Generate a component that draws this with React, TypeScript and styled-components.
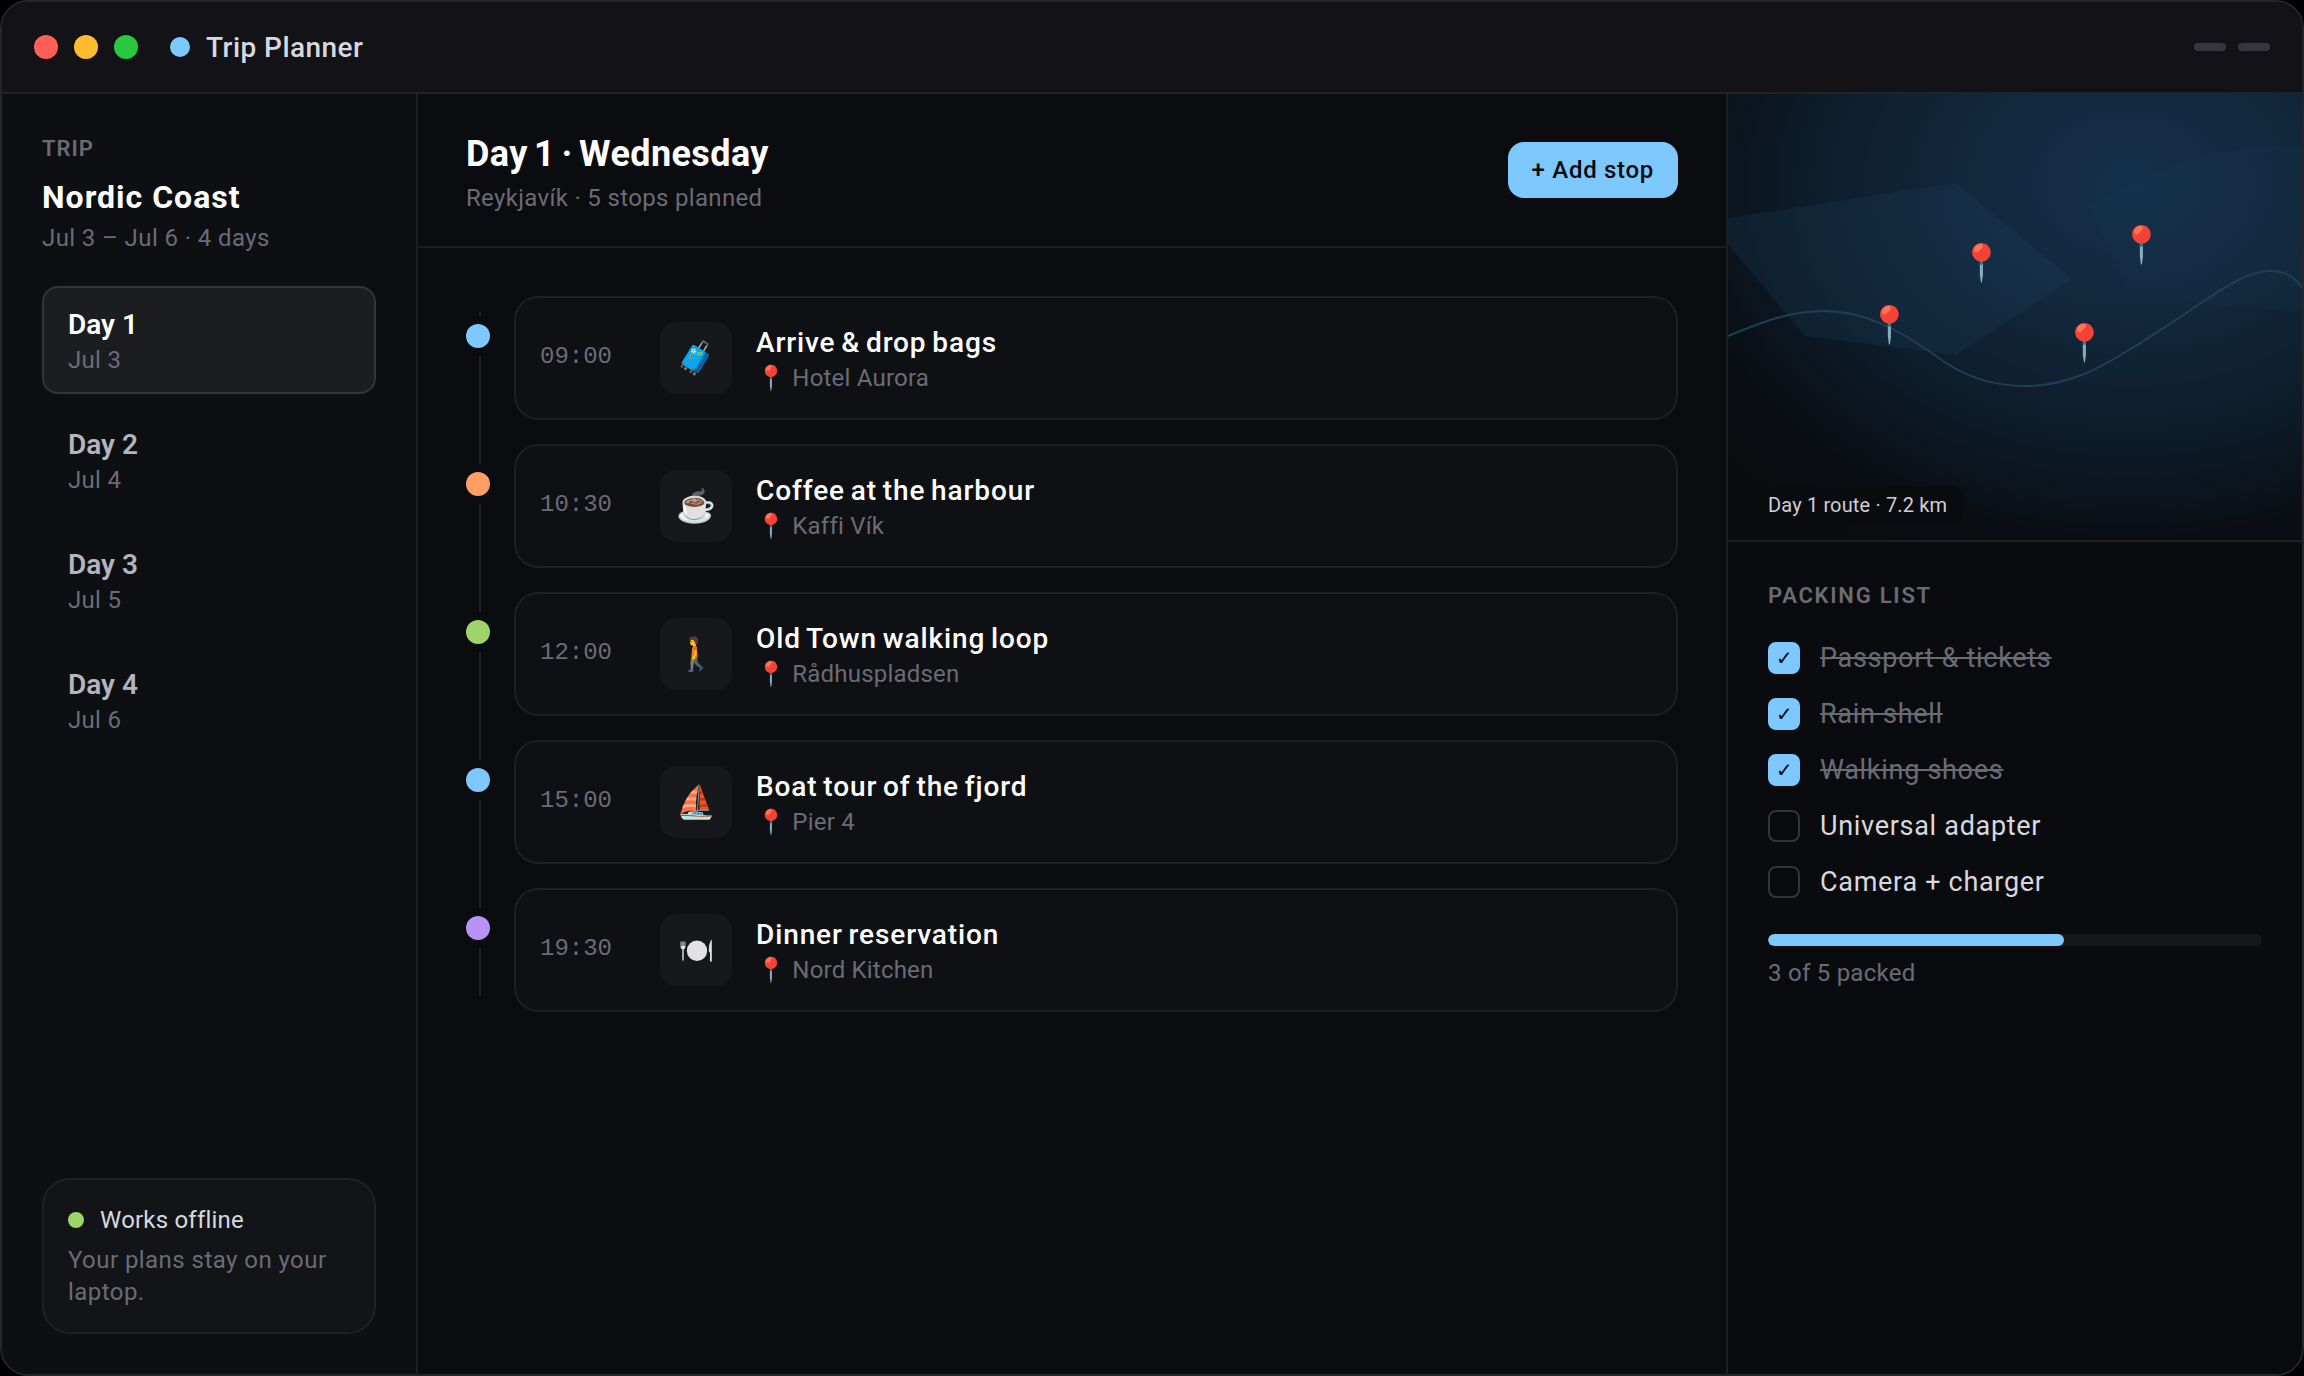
import React from "react";
import styled, { createGlobalStyle } from "styled-components";

const GlobalStyle = createGlobalStyle`
  * {
    box-sizing: border-box;
  }

  html,
  body {
    margin: 0;
    padding: 0;
    background: #000;
  }

  body {
    font-family: Roboto, "Noto Sans", sans-serif;
  }
`;

function PlateIcon() {
  return (
    <svg width="32" height="23" viewBox="0 0 32 23" fill="#e2e2e6">
      <path d="M0.6 2.5 H1.5 V7 H2.4 V2.5 H3.6 V7 H4.5 V2.5 H5.4 V8 A2.4 2.4 0 0 1 3.7 10.3 V21.5 H2.3 V10.3 A2.4 2.4 0 0 1 0.6 8 Z" />
      <circle cx="17" cy="11.7" r="10.2" />
      <path d="M31.8 0.5 C29.4 3 28.6 8 29 13 L30 13.5 V22.5 H31.8 Z" />
    </svg>
  );
}

const days = [
  { name: "Day 1", date: "Jul 3" },
  { name: "Day 2", date: "Jul 4" },
  { name: "Day 3", date: "Jul 5" },
  { name: "Day 4", date: "Jul 6" },
];

const stops = [
  { time: "09:00", icon: "🧳", title: "Arrive & drop bags", place: "Hotel Aurora", color: "#7cc8ff" },
  { time: "10:30", icon: "☕", title: "Coffee at the harbour", place: "Kaffi Vík", color: "#ff9f66" },
  { time: "12:00", icon: "🚶", title: "Old Town walking loop", place: "Rådhuspladsen", color: "#a0d468" },
  { time: "15:00", icon: "⛵", title: "Boat tour of the fjord", place: "Pier 4", color: "#7cc8ff" },
  { time: "19:30", icon: <PlateIcon />, title: "Dinner reservation", place: "Nord Kitchen", color: "#b794f4" },
];

const packing = [
  { label: "Passport & tickets", done: true },
  { label: "Rain shell", done: true },
  { label: "Walking shoes", done: true },
  { label: "Universal adapter", done: false },
  { label: "Camera + charger", done: false },
];

const pins = [
  { x: 161, y: 210 },
  { x: 253, y: 148 },
  { x: 413, y: 130 },
  { x: 356, y: 228 },
];

export default function App() {
  const doneCount = packing.filter((item) => item.done).length;

  return (
    <>
      <GlobalStyle />
      <Window>
        <TitleBar>
          <Light $color="#ff5f57" />
          <Light $color="#febc2e" />
          <Light $color="#28c840" />
          <BrandDot />
          <AppName>Trip Planner</AppName>
          <WindowControls>
            <ControlBar />
            <ControlBar />
          </WindowControls>
        </TitleBar>

        <Body>
          <Sidebar>
            <TripLabel>TRIP</TripLabel>
            <TripName>Nordic Coast</TripName>
            <TripDates>Jul 3 – Jul 6 · 4 days</TripDates>
            <DayList>
              {days.map((day, index) => (
                <DayItem key={day.name} $active={index === 0}>
                  <DayName $active={index === 0}>{day.name}</DayName>
                  <DayDate>{day.date}</DayDate>
                </DayItem>
              ))}
            </DayList>
            <OfflineCard>
              <OfflineHead>
                <OfflineDot />
                Works offline
              </OfflineHead>
              <OfflineText>Your plans stay on your laptop.</OfflineText>
            </OfflineCard>
          </Sidebar>

          <Main>
            <MainHeader>
              <HeadText>
                <DayTitle>Day 1 · Wednesday</DayTitle>
                <DaySub>Reykjavík · 5 stops planned</DaySub>
              </HeadText>
              <AddButton>+ Add stop</AddButton>
            </MainHeader>

            <Timeline>
              {stops.map((stop) => (
                <StopRow key={stop.time}>
                  <StopDot $color={stop.color} />
                  <StopCard>
                    <StopTime>{stop.time}</StopTime>
                    <StopIcon>{stop.icon}</StopIcon>
                    <StopText>
                      <StopTitle>{stop.title}</StopTitle>
                      <StopPlace>📍 {stop.place}</StopPlace>
                    </StopText>
                  </StopCard>
                </StopRow>
              ))}
            </Timeline>
          </Main>

          <RightPanel>
            <MapBox>
              <MapArt viewBox="0 0 574 446" preserveAspectRatio="none">
                <polygon points="0,124 228,89 344,185 228,261 77,242 0,151" fill="#1e4160" fillOpacity="0.24" />
                <polygon points="402,203 574,218 574,52 545,52 470,60 360,110" fill="#1e4160" fillOpacity="0.1" />
                <path
                  d="M0 242 C 34 228 62 217 96 217 C 140 217 178 240 215 267 C 240 284 268 292 297 292 C 340 292 372 274 401 256 C 426 241 448 226 476 207 C 500 191 522 177 542 177 C 558 177 568 184 574 194"
                  fill="none"
                  stroke="#1e3f55"
                  strokeWidth="2"
                />
              </MapArt>
              {pins.map((pin) => (
                <MapPin key={pin.x} $x={pin.x} $y={pin.y}>
                  📍
                </MapPin>
              ))}
              <RouteBadge>Day 1 route · 7.2 km</RouteBadge>
            </MapBox>

            <PackingSection>
              <PackingTitle>PACKING LIST</PackingTitle>
              <PackingList>
                {packing.map((item) => (
                  <PackingRow key={item.label}>
                    <CheckBox $done={item.done}>{item.done ? "✓" : ""}</CheckBox>
                    <PackingLabel $done={item.done}>{item.label}</PackingLabel>
                  </PackingRow>
                ))}
              </PackingList>
              <ProgressTrack>
                <ProgressFill style={{ width: `${(doneCount / packing.length) * 100}%` }} />
              </ProgressTrack>
              <ProgressText>
                {doneCount} of {packing.length} packed
              </ProgressText>
            </PackingSection>
          </RightPanel>
        </Body>
      </Window>
    </>
  );
}

const Window = styled.div`
  display: flex;
  flex-direction: column;
  width: 2304px;
  height: 1376px;
  overflow: hidden;
  border: 2px solid #25262b;
  border-radius: 28px;
  background: #0b0c0f;
`;

const TitleBar = styled.header`
  display: flex;
  flex: none;
  align-items: center;
  height: 92px;
  padding: 0 32px;
  border-bottom: 2px solid #222327;
  background: #121217;
`;

const Light = styled.span<{ $color: string }>`
  width: 24px;
  height: 24px;
  margin-right: 16px;
  border-radius: 50%;
  background: ${(p) => p.$color};
`;

const BrandDot = styled.span`
  width: 20px;
  height: 20px;
  margin-left: 16px;
  margin-right: 16px;
  border-radius: 50%;
  background: #7cc8ff;
`;

const AppName = styled.span`
  color: #d8d8de;
  font-size: 28px;
  font-weight: 500;
  letter-spacing: 0.45px;
`;

const WindowControls = styled.div`
  display: flex;
  gap: 12px;
  margin-left: auto;
`;

const ControlBar = styled.span`
  width: 32px;
  height: 8px;
  border-radius: 4px;
  background: #36373c;
`;

const Body = styled.div`
  display: flex;
  flex: 1;
  min-height: 0;
`;

const Sidebar = styled.aside`
  display: flex;
  flex: none;
  flex-direction: column;
  width: 416px;
  padding: 40px;
  border-right: 2px solid #1e1f23;
  background: #0e0f12;
`;

const TripLabel = styled.div`
  color: #6b6b76;
  font-size: 22px;
  font-weight: 600;
  letter-spacing: 1px;
  line-height: 30px;
`;

const TripName = styled.div`
  margin-top: 12px;
  color: #fff;
  font-size: 32px;
  font-weight: 700;
  letter-spacing: 1px;
  line-height: 42px;
`;

const TripDates = styled.div`
  margin-top: 4px;
  color: #6b6b76;
  font-size: 24px;
  letter-spacing: 0.4px;
  line-height: 32px;
`;

const DayList = styled.nav`
  display: flex;
  flex-direction: column;
  gap: 12px;
  margin-top: 32px;
`;

const DayItem = styled.div<{ $active: boolean }>`
  height: 108px;
  padding: 20px 24px;
  border: 2px solid ${(p) => (p.$active ? "#333438" : "transparent")};
  border-radius: 16px;
  background: ${(p) => (p.$active ? "#1c1d20" : "transparent")};
`;

const DayName = styled.div<{ $active: boolean }>`
  color: ${(p) => (p.$active ? "#fff" : "#b4b4bc")};
  font-size: 28px;
  font-weight: 600;
  line-height: 34px;
`;

const DayDate = styled.div`
  margin-top: 2px;
  color: #6b6b76;
  font-size: 24px;
  letter-spacing: 0.3px;
  line-height: 32px;
`;

const OfflineCard = styled.div`
  margin-top: auto;
  padding: 24px;
  border: 2px solid #202125;
  border-radius: 28px;
  background: #131417;
`;

const OfflineHead = styled.div`
  display: flex;
  align-items: center;
  gap: 16px;
  color: #d8d8de;
  font-size: 24px;
  letter-spacing: 0.2px;
  line-height: 32px;
`;

const OfflineDot = styled.span`
  width: 16px;
  height: 16px;
  border-radius: 50%;
  background: #a0d468;
`;

const OfflineText = styled.div`
  margin-top: 8px;
  color: #6b6b76;
  font-size: 24px;
  letter-spacing: 0.45px;
  line-height: 32px;
`;

const Main = styled.main`
  display: flex;
  flex: 1;
  flex-direction: column;
  min-width: 0;
  background: #0b0c0f;
`;

const MainHeader = styled.div`
  display: flex;
  flex: none;
  align-items: center;
  justify-content: space-between;
  height: 154px;
  padding: 0 48px;
  border-bottom: 2px solid #1e1f23;
`;

const HeadText = styled.div`
  margin-top: 6px;
`;

const DayTitle = styled.h1`
  margin: 0;
  color: #fff;
  font-size: 36px;
  font-weight: 700;
  letter-spacing: 0.4px;
  word-spacing: -3px;
  line-height: 44px;
`;

const DaySub = styled.div`
  margin-top: 5px;
  color: #6b6b76;
  font-size: 24px;
  letter-spacing: 0.33px;
  line-height: 34px;
`;

const AddButton = styled.button`
  height: 56px;
  padding: 0 24px;
  border: none;
  border-radius: 16px;
  background: #7cc8ff;
  color: #0a0a0c;
  font-family: inherit;
  font-size: 24px;
  font-weight: 500;
  letter-spacing: 0.7px;
`;

const Timeline = styled.div`
  position: relative;
  display: flex;
  flex-direction: column;
  gap: 24px;
  padding: 48px 48px 0;

  &::before {
    content: "";
    position: absolute;
    top: 64px;
    left: 61px;
    width: 2px;
    height: 684px;
    background: #1e1f23;
  }
`;

const StopRow = styled.div`
  position: relative;
  display: flex;
  gap: 24px;
  align-items: flex-start;
`;

const StopDot = styled.span<{ $color: string }>`
  flex: none;
  width: 24px;
  height: 24px;
  margin-top: 28px;
  border-radius: 50%;
  background: ${(p) => p.$color};
  box-shadow: 0 0 0 8px #0b0c0f;
`;

const StopCard = styled.div`
  display: flex;
  flex: 1;
  align-items: center;
  height: 124px;
  padding: 0 24px;
  border: 2px solid #1e1f23;
  border-radius: 24px;
  background: #0f1013;
`;

const StopTime = styled.div`
  flex: none;
  width: 96px;
  margin-right: 24px;
  padding-bottom: 2px;
  color: #6b6b76;
  font-family: "Liberation Mono", monospace;
  font-size: 24px;
  line-height: 26px;
`;

const StopIcon = styled.div`
  display: flex;
  flex: none;
  align-items: center;
  justify-content: center;
  width: 72px;
  height: 72px;
  margin-right: 24px;
  border-radius: 16px;
  background: #17181b;
  color: #e2e2e6;
  font-size: 32px;
`;

const StopText = styled.div`
  padding-top: 3px;
`;

const StopTitle = styled.div`
  color: #fff;
  font-size: 28px;
  font-weight: 500;
  letter-spacing: 0.88px;
  word-spacing: -2px;
  line-height: 36px;
`;

const StopPlace = styled.div`
  margin-top: 1px;
  color: #6b6b76;
  font-size: 24px;
  letter-spacing: 0.2px;
  line-height: 32px;
`;

const RightPanel = styled.aside`
  display: flex;
  flex: none;
  flex-direction: column;
  width: 576px;
  border-left: 2px solid #1e1f23;
  background: #0a0b0e;
`;

const MapBox = styled.div`
  position: relative;
  flex: none;
  height: 448px;
  overflow: hidden;
  border-bottom: 2px solid #1e1f23;
  background: radial-gradient(ellipse 95% 95% at 70% 20%, #15304a 0%, #12283d 30%, #0d1c2a 60%, #0a0e14 84%, #0a0b0e 100%);
`;

const MapArt = styled.svg`
  position: absolute;
  inset: 0;
  width: 100%;
  height: 100%;
`;

const MapPin = styled.span<{ $x: number; $y: number }>`
  position: absolute;
  top: ${(p) => p.$y}px;
  left: ${(p) => p.$x}px;
  font-size: 36px;
  line-height: 42px;
  transform: translateX(-50%);
`;

const RouteBadge = styled.div`
  position: absolute;
  left: 24px;
  bottom: 16px;
  height: 38px;
  padding: 0 16px;
  border-radius: 12px;
  background: #0a0b0e;
  color: #cfcfd4;
  font-size: 20px;
  letter-spacing: 0.15px;
  line-height: 38px;
`;

const PackingSection = styled.section`
  padding: 34px 40px 0;
`;

const PackingTitle = styled.div`
  color: #6b6b76;
  font-size: 22px;
  font-weight: 600;
  letter-spacing: 1.76px;
  line-height: 40px;
`;

const PackingList = styled.div`
  display: flex;
  flex-direction: column;
  gap: 24px;
  margin-top: 26px;
`;

const PackingRow = styled.div`
  display: flex;
  align-items: center;
  gap: 20px;
  height: 32px;
`;

const CheckBox = styled.span<{ $done: boolean }>`
  display: flex;
  flex: none;
  align-items: center;
  justify-content: center;
  width: 32px;
  height: 32px;
  border: 2px solid ${(p) => (p.$done ? "#7cc8ff" : "#333438")};
  border-radius: 8px;
  background: ${(p) => (p.$done ? "#7cc8ff" : "transparent")};
  color: #0a0a0c;
  font-size: 20px;
`;

const PackingLabel = styled.span<{ $done: boolean }>`
  color: ${(p) => (p.$done ? "#6b6b76" : "#d8d8de")};
  font-size: 27px;
  letter-spacing: 0.7px;
  text-decoration: ${(p) => (p.$done ? "line-through" : "none")};
`;

const ProgressTrack = styled.div`
  height: 12px;
  margin-top: 36px;
  overflow: hidden;
  border-radius: 6px;
  background: #15171a;
`;

const ProgressFill = styled.div`
  height: 100%;
  border-radius: 6px;
  background: #7cc8ff;
`;

const ProgressText = styled.div`
  margin-top: 11px;
  color: #6b6b76;
  font-size: 24px;
  letter-spacing: 0.25px;
  line-height: 32px;
`;
